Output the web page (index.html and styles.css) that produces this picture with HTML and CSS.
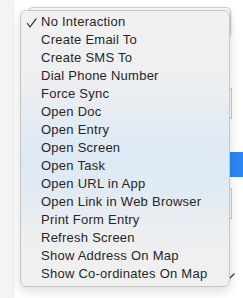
FILE: index.html
```html
<!DOCTYPE html>
<html>
<head>
    <title>Action</title>
    <link rel="stylesheet" href="styles.css">
</head>
<body>
    <div class="page">
        <div class="sidebar"></div>
        <div class="main">
            <div class="popup-btn"></div>
            <div class="field field-first"></div>
            <div class="primary-btn"></div>
            <div class="field field-second"></div>
            <div class="select-row">
                <svg class="chevron" width="8" height="8" viewBox="0 0 8 8">
                    <path d="M1 7 L6 2" stroke="#1f3f7a" stroke-width="1.4" stroke-linecap="round" fill="none"/>
                </svg>
            </div>
        </div>
    </div>

    <div class="menu">
        <div class="menu-item checked">
            <svg class="check" width="12" height="12" viewBox="0 0 12 12">
                <path d="M1.5 6.5 L4 10 L10 1.8" stroke="#2b2b2b" stroke-width="1.2" stroke-linecap="round" stroke-linejoin="round" fill="none"/>
            </svg>
            No Interaction
        </div>
        <div class="menu-item">Create Email To</div>
        <div class="menu-item">Create SMS To</div>
        <div class="menu-item">Dial Phone Number</div>
        <div class="menu-item">Force Sync</div>
        <div class="menu-item">Open Doc</div>
        <div class="menu-item">Open Entry</div>
        <div class="menu-item">Open Screen</div>
        <div class="menu-item">Open Task</div>
        <div class="menu-item">Open URL in App</div>
        <div class="menu-item">Open Link in Web Browser</div>
        <div class="menu-item">Print Form Entry</div>
        <div class="menu-item">Refresh Screen</div>
        <div class="menu-item">Show Address On Map</div>
        <div class="menu-item">Show Co-ordinates On Map</div>
    </div>
</body>
</html>
```

FILE: styles.css
```css
body {
    margin: 0;
    font-family: 'Liberation Sans', Arial, sans-serif;
    background-color: #ffffff;
    overflow: hidden;
}
.page {
    display: flex;
    height: 298px;
}
.sidebar {
    width: 14px;
    background-color: #f4f4f4;
    border-right: 1px solid #f9f9f9;
}
.main {
    flex: 1;
    display: flex;
    flex-direction: column;
    padding-top: 7px;
    padding-left: 13px;
}
.popup-btn {
    height: 31px;
    margin-right: 12px;
    box-sizing: border-box;
    border: 1px solid #cfcfcf;
    border-radius: 5px;
    background: #fafafa;
    box-shadow: 0 1px 2px rgba(0,0,0,0.25);
}
.field {
    height: 31px;
    margin-right: 11px;
    box-sizing: border-box;
    border: 1px solid #c9c9c9;
    background: #ffffff;
}
.field-first {
    margin-top: 50px;
}
.primary-btn {
    height: 25px;
    margin-top: 33px;
    margin-right: -10px;
    background-color: #2c85f4;
    border-radius: 4px;
}
.field-second {
    margin-top: 11px;
}
.select-row {
    display: flex;
    justify-content: flex-end;
    margin-top: 53px;
    margin-right: 7px;
}
.menu {
    position: absolute;
    left: 20px;
    top: 10px;
    width: 210px;
    box-sizing: border-box;
    padding: 2px 0 3px 0;
    border: 1px solid #c6c6c6;
    border-radius: 6px;
    background: linear-gradient(to bottom, #f1f1f1 0%, #eeeff1 25%, #e3ebf3 42%, #dce9f4 55%, #e3ebf2 68%, #eeeff0 82%, #f0f0f0 100%);
    box-shadow: 0 4px 12px rgba(0,0,0,0.14);
}
.menu-item {
    position: relative;
    height: 18px;
    line-height: 18px;
    padding-left: 20px;
    font-size: 13px;
    letter-spacing: 0.25px;
    color: #262626;
    white-space: nowrap;
}
.check {
    position: absolute;
    left: 5px;
    top: 4px;
}
```
